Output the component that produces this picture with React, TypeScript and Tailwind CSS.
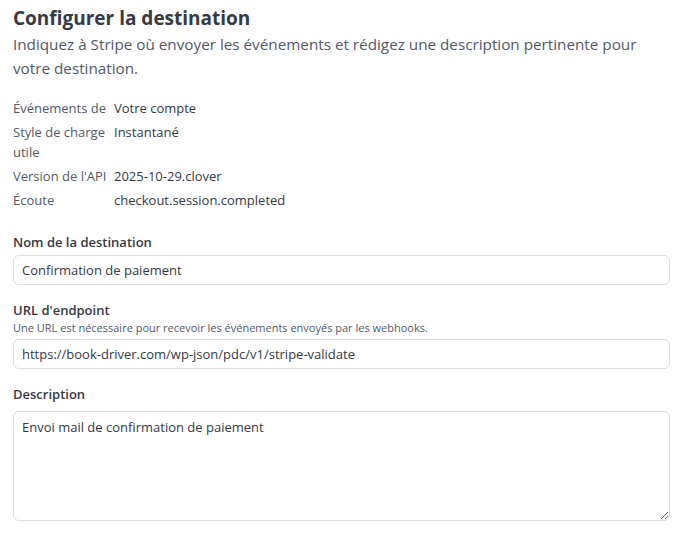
import React from "react";

const details: { label: string; value: string }[] = [
  { label: "Événements de", value: "Votre compte" },
  { label: "Style de charge utile", value: "Instantané" },
  { label: "Version de l'API", value: "2025-10-29.clover" },
  { label: "Écoute", value: "checkout.session.completed" },
];

const font = { fontFamily: '"Segoe UI", "Open Sans", sans-serif' };

export default function App() {
  return (
    <div className="w-[692px] h-[535px] bg-white pl-[13px] pr-[22px] pt-[6px] text-[#353a44]" style={font}>
      {/* En-tête */}
      <h1 className="text-[19px] font-bold leading-[24px] text-[#353a44]">Configurer la destination</h1>
      <p className="mt-[2px] text-[15.25px] leading-[24px] text-[#545969]">
        Indiquez à Stripe où envoyer les événements et rédigez une description pertinente pour votre destination.
      </p>

      {/* Détails */}
      <dl className="mt-[18px] flex flex-col gap-[4px] text-[13px] leading-[20px]">
        {details.map((d) => (
          <div key={d.label} className="flex">
            <dt className="w-[101px] shrink-0 text-[#545969]">{d.label}</dt>
            <dd className="text-[#353a44]">{d.value}</dd>
          </div>
        ))}
      </dl>

      {/* Formulaire */}
      <div className="mt-[22px] flex flex-col">
        <label className="text-[13px] font-semibold leading-[20px] text-[#353a44]">Nom de la destination</label>
        <input
          readOnly
          value="Confirmation de paiement"
          className="mt-[3px] h-[30px] w-full rounded-[6px] border border-[#d8dee4] px-[8px] text-[13px] text-[#353a44] outline-none"
          style={font}
        />

        <label className="mt-[15px] text-[13px] font-semibold leading-[20px] text-[#353a44]">URL d'endpoint</label>
        <span className="text-[11px] leading-[16px] text-[#545969]">
          Une URL est nécessaire pour recevoir les événements envoyés par les webhooks.
        </span>
        <input
          readOnly
          value="https://book-driver.com/wp-json/pdc/v1/stripe-validate"
          className="mt-[3px] h-[30px] w-full rounded-[6px] border border-[#d8dee4] px-[8px] text-[13px] text-[#353a44] outline-none"
          style={font}
        />

        <label className="mt-[15px] text-[13px] font-semibold leading-[20px] text-[#353a44]">Description</label>
        <textarea
          readOnly
          value="Envoi mail de confirmation de paiement"
          className="mt-[7px] h-[110px] w-full rounded-[6px] border border-[#d8dee4] px-[8px] py-[5px] text-[13px] leading-[20px] text-[#353a44] outline-none"
          style={font}
        />
      </div>
    </div>
  );
}
